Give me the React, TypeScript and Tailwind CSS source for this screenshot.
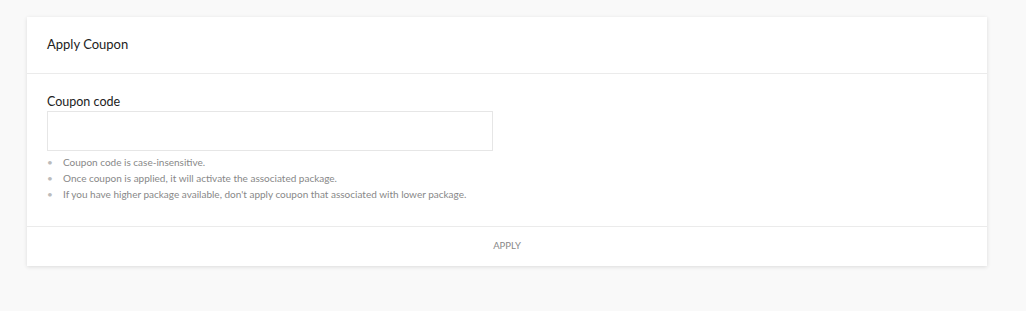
import React, { useState } from 'react';

const hints = [
  'Coupon code is case-insensitive.',
  'Once coupon is applied, it will activate the associated package.',
  "If you have higher package available, don't apply coupon that associated with lower package.",
];

const App = () => {
  const [code, setCode] = useState('');

  return (
    <div className="min-h-[311px] bg-[#f9f9f9] pt-[17px] pl-[27px] pr-[39px] font-['Lato','Open_Sans',sans-serif]">
      <div className="bg-white shadow-[0_1px_4px_rgba(0,0,0,0.12)]">
        {/* Header */}
        <div className="h-[57px] flex items-center px-5 border-b border-[#ebebeb]">
          <h2 className="text-[13px] text-[#222]">Apply Coupon</h2>
        </div>

        {/* Body */}
        <div className="px-5 pt-[18px] pb-[24px]">
          <label htmlFor="coupon" className="block text-[12.5px] leading-[19px] text-[#222]">
            Coupon code
          </label>
          <input
            id="coupon"
            type="text"
            value={code}
            onChange={(e) => setCode(e.target.value)}
            className="block w-[446px] h-[40px] border border-[#e6e6e6] px-3 text-[13px] outline-none"
          />
          <ul className="mt-[3px] text-[10px] leading-[16px] text-[#888]">
            {hints.map((h) => (
              <li key={h} className="flex">
                <span className="w-4 text-[#bbb]">•</span>
                <span>{h}</span>
              </li>
            ))}
          </ul>
        </div>

        {/* Footer */}
        <div className="border-t border-[#ebebeb] h-[40px] flex items-center justify-center">
          <button type="button" className="text-[9.5px] text-[#888]">
            APPLY
          </button>
        </div>
      </div>
    </div>
  );
};

export default App;
